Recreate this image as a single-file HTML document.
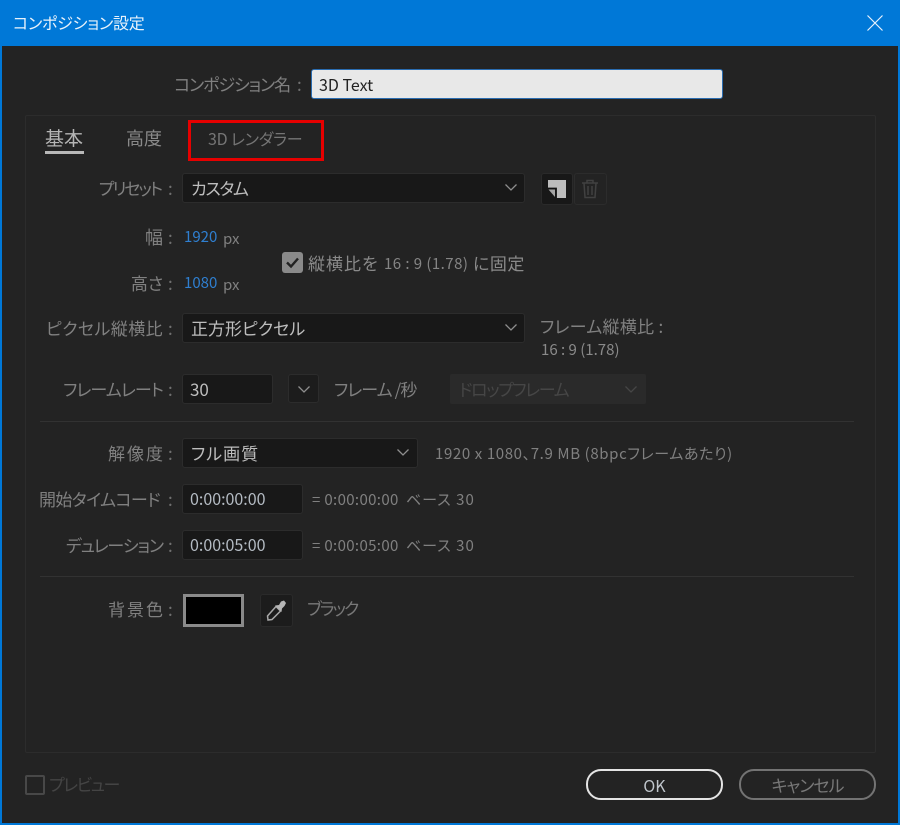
<!DOCTYPE html>
<html lang="ja"><head><meta charset="utf-8"><title>コンポジション設定</title>
<style>
html,body{margin:0;padding:0;background:#232323}
#w{position:relative;width:900px;height:825px;overflow:hidden;background:#232323;font-family:"Noto Sans CJK JP","Liberation Sans",sans-serif;font-feature-settings:"palt";font-size:17px;color:#8f8f8f;filter:blur(.3px)}
#w div,#w svg{position:absolute;box-sizing:border-box}
.t{white-space:nowrap;line-height:24px;height:24px}
.r{right:737px;text-align:right;color:#808080}
.c{left:168px;color:#707070}
.f{background:#181818;border:1px solid #2c2c2c;border-radius:3px}
.v{color:#bdbdbd}
.b{color:#2f7fd0;font-size:15px}
.s{font-size:15px;color:#808080}
.hr{background:#323232;height:1px;left:40px;width:814px}
</style></head><body><div id="w">
<div style="left:0;top:0;width:900px;height:825px;border:2px solid #0078d7;border-top:0"></div>
<div style="left:0;top:0;width:900px;height:46px;background:#0078d7"></div>
<div class="t" style="left:13px;top:10px;color:#e8f2fb;font-size:16px;letter-spacing:-.2px">コンポジション設定</div>
<svg style="left:866px;top:14px" width="18" height="18" viewBox="0 0 18 18"><path d="M1.5 1.5L16.5 16.5M16.5 1.5L1.5 16.5" stroke="#e8f2fb" stroke-width="1.2" fill="none"/></svg>

<div class="t" style="right:610px;top:72px;color:#808080;letter-spacing:-1.1px">コンポジション名</div>
<div class="t c" style="left:297px;top:72px">:</div>
<div style="left:311px;top:69px;width:412px;height:30px;background:#e8e8e8;border:1px solid #2a6cb0;border-radius:3px"></div>
<div class="t" style="left:319px;top:72px;color:#222;font-size:16px">3D Text</div>

<div style="left:25px;top:115px;width:851px;height:638px;border:1px solid #2c2c2c;border-radius:2px"></div>

<div class="t" style="left:45px;top:126px;color:#b5b5b5;font-size:19px">基本</div>
<div style="left:45px;top:151px;width:39px;height:3px;background:#b8b8b8"></div>
<div class="t" style="left:126px;top:126px;color:#8a8a8a;font-size:18px">高度</div>
<div style="left:188px;top:120px;width:136px;height:41px;border:3px solid #e60000"></div>
<div class="t" style="left:208px;top:126px;color:#757575;font-size:16px;letter-spacing:-.2px">3D レンダラー</div>

<div class="t r" style="top:176px;letter-spacing:-2px;right:739px">プリセット</div><div class="t c" style="top:176px">:</div>
<div class="f" style="left:182px;top:173px;width:343px;height:30px"></div>
<div class="t v" style="left:191px;top:176px;letter-spacing:-1.3px">カスタム</div>
<svg style="left:504px;top:183px" width="14" height="9" viewBox="0 0 14 9"><path d="M1.5 1.5L7 7L12.5 1.5" stroke="#8e8e8e" stroke-width="1.3" fill="none"/></svg>
<div class="f" style="left:541px;top:173px;width:32px;height:32px;border-color:#2a2a2a"></div>
<svg style="left:547px;top:179px" width="20" height="20" viewBox="0 0 20 20"><path d="M1 1H19V19H9V9H1Z" fill="#bdbdbd"/><path d="M1.5 10.5H8V18Z" fill="#a5a5a5"/><path d="M1 9.2H9.3V19" stroke="#111" stroke-width="1.2" fill="none"/></svg>
<div style="left:574px;top:173px;width:33px;height:32px;border:1px solid #2c2c2c;border-radius:3px"></div>
<svg style="left:581px;top:179px" width="18" height="20" viewBox="0 0 18 20" fill="none" stroke="#414141" stroke-width="1.5"><path d="M1 4H17M6 4V1.5H12V4M3 4L4 18.5H14L15 4M7 7V16M11 7V16"/></svg>

<div class="t r" style="top:225px;font-size:18px">幅</div><div class="t c" style="top:225px">:</div>
<div class="t b" style="left:184px;top:225px">1920</div>
<div class="t s" style="left:223px;top:227px">px</div>
<div class="t r" style="top:271px">高さ</div><div class="t c" style="top:271px">:</div>
<div class="t b" style="left:184px;top:271px">1080</div>
<div class="t s" style="left:223px;top:273px">px</div>
<div style="left:282px;top:252px;width:21px;height:21px;background:#8a8a8a;border-radius:3px"></div>
<svg style="left:282px;top:252px" width="21" height="21" viewBox="0 0 21 21"><path d="M5 10.5L9 14.5L16 6.5" stroke="#222" stroke-width="2.4" fill="none"/></svg>
<div class="t" style="left:308px;top:251px;color:#8a8a8a;font-size:17px;letter-spacing:1px">縦横比を</div>
<div class="t s" style="left:384px;top:252px;letter-spacing:.45px;color:#858585">16 : 9 (1.78)</div>
<div class="t" style="left:473px;top:251px;color:#8a8a8a;font-size:17px;letter-spacing:.5px">に固定</div>

<div class="t r" style="top:316px;letter-spacing:.4px">ピクセル縦横比</div><div class="t c" style="top:316px">:</div>
<div class="f" style="left:182px;top:313px;width:343px;height:30px"></div>
<div class="t v" style="left:191px;top:316px">正方形ピクセル</div>
<svg style="left:504px;top:323px" width="14" height="9" viewBox="0 0 14 9"><path d="M1.5 1.5L7 7L12.5 1.5" stroke="#8e8e8e" stroke-width="1.3" fill="none"/></svg>
<div class="t" style="left:540px;top:314px;color:#808080;letter-spacing:.3px">フレーム縦横比 :</div>
<div class="t s" style="left:541px;top:338px;color:#8a8a8a">16 : 9 (1.78)</div>

<div class="t r" style="top:377px;letter-spacing:-.9px">フレームレート</div><div class="t c" style="top:377px">:</div>
<div class="f" style="left:182px;top:374px;width:91px;height:30px"></div>
<div class="t v" style="left:190px;top:377px">30</div>
<div class="f" style="left:288px;top:374px;width:31px;height:29px;background:#1c1c1c"></div>
<svg style="left:297px;top:385px" width="14" height="9" viewBox="0 0 14 9"><path d="M1.5 1.5L7 7L12.5 1.5" stroke="#8e8e8e" stroke-width="1.3" fill="none"/></svg>
<div class="t" style="left:334px;top:377px;color:#808080;letter-spacing:-.9px">フレーム /秒</div>
<div style="left:450px;top:374px;width:196px;height:30px;background:#2a2a2a;border-radius:2px"></div>
<div class="t" style="left:459px;top:377px;color:#464646;letter-spacing:-1.4px">ドロップフレーム</div>
<svg style="left:624px;top:385px" width="14" height="9" viewBox="0 0 14 9"><path d="M1.5 1.5L7 7L12.5 1.5" stroke="#464646" stroke-width="1.3" fill="none"/></svg>

<div class="hr" style="top:421px"></div>

<div class="t r" style="top:441px;letter-spacing:2px;right:735px">解像度</div><div class="t c" style="top:441px">:</div>
<div class="f" style="left:182px;top:438px;width:236px;height:30px"></div>
<div class="t v" style="left:191px;top:441px;letter-spacing:1px">フル画質</div>
<svg style="left:396px;top:448px" width="14" height="9" viewBox="0 0 14 9"><path d="M1.5 1.5L7 7L12.5 1.5" stroke="#8e8e8e" stroke-width="1.3" fill="none"/></svg>
<div class="t s" style="left:435px;top:442px;letter-spacing:.62px">1920 x 1080、7.9 MB (8bpcフレームあたり)</div>

<div class="t r" style="top:487px;letter-spacing:-.6px;right:740px">開始タイムコード</div><div class="t c" style="top:487px">:</div>
<div class="f" style="left:182px;top:484px;width:121px;height:30px"></div>
<div class="t" style="left:190px;top:486px;color:#b5bcc4;font-size:16px">0:00:00:00</div>
<div class="t s" style="left:312px;top:488px;letter-spacing:.35px">= 0:00:00:00</div>
<div class="t s" style="left:406px;top:488px;letter-spacing:1px">ベース 30</div>

<div class="t r" style="top:533px;letter-spacing:-1.1px">デュレーション</div><div class="t c" style="top:533px">:</div>
<div class="f" style="left:182px;top:530px;width:121px;height:30px"></div>
<div class="t" style="left:190px;top:532px;color:#b5bcc4;font-size:16px">0:00:05:00</div>
<div class="t s" style="left:312px;top:534px;letter-spacing:.35px">= 0:00:05:00</div>
<div class="t s" style="left:406px;top:534px;letter-spacing:1px">ベース 30</div>

<div class="hr" style="top:576px"></div>

<div class="t r" style="top:597px;letter-spacing:2px;right:735px">背景色</div><div class="t c" style="top:597px">:</div>
<div style="left:183px;top:594px;width:61px;height:33px;background:#000;border:3px solid #8a8a8a"></div>
<div class="f" style="left:260px;top:594px;width:33px;height:33px;background:#1c1c1c;border-color:#2a2a2a"></div>
<svg style="left:264px;top:598px" width="25" height="25" viewBox="0 0 25 25"><path d="M12 8.5L16.5 13L8 21.5L4 22L3.5 18Z" stroke="#a8a8a8" stroke-width="1.5" fill="none"/><path d="M11 7.5L15 7L17 3.5L20 2.5L22 5L20.5 8L18 10.5L17.5 14Z" fill="#b5b5b5"/></svg>
<div class="t" style="left:307px;top:596px;color:#787878;letter-spacing:-2px">ブラック</div>

<div style="left:25px;top:775px;width:20px;height:20px;border:2px solid #484848;border-radius:2px"></div>
<div class="t" style="left:49px;top:772px;color:#444;letter-spacing:-1.5px">プレビュー</div>

<div style="left:586px;top:769px;width:137px;height:31px;border:2px solid #e4e4e4;border-radius:15px"></div>
<div class="t" style="left:586px;top:773px;width:137px;text-align:center;color:#c0c6cc;font-size:16px">OK</div>
<div style="left:739px;top:769px;width:137px;height:31px;border:2px solid #737373;border-radius:15px"></div>
<div class="t" style="left:739px;top:773px;width:137px;text-align:center;color:#787878;letter-spacing:-1px">キャンセル</div>
</div></body></html>
